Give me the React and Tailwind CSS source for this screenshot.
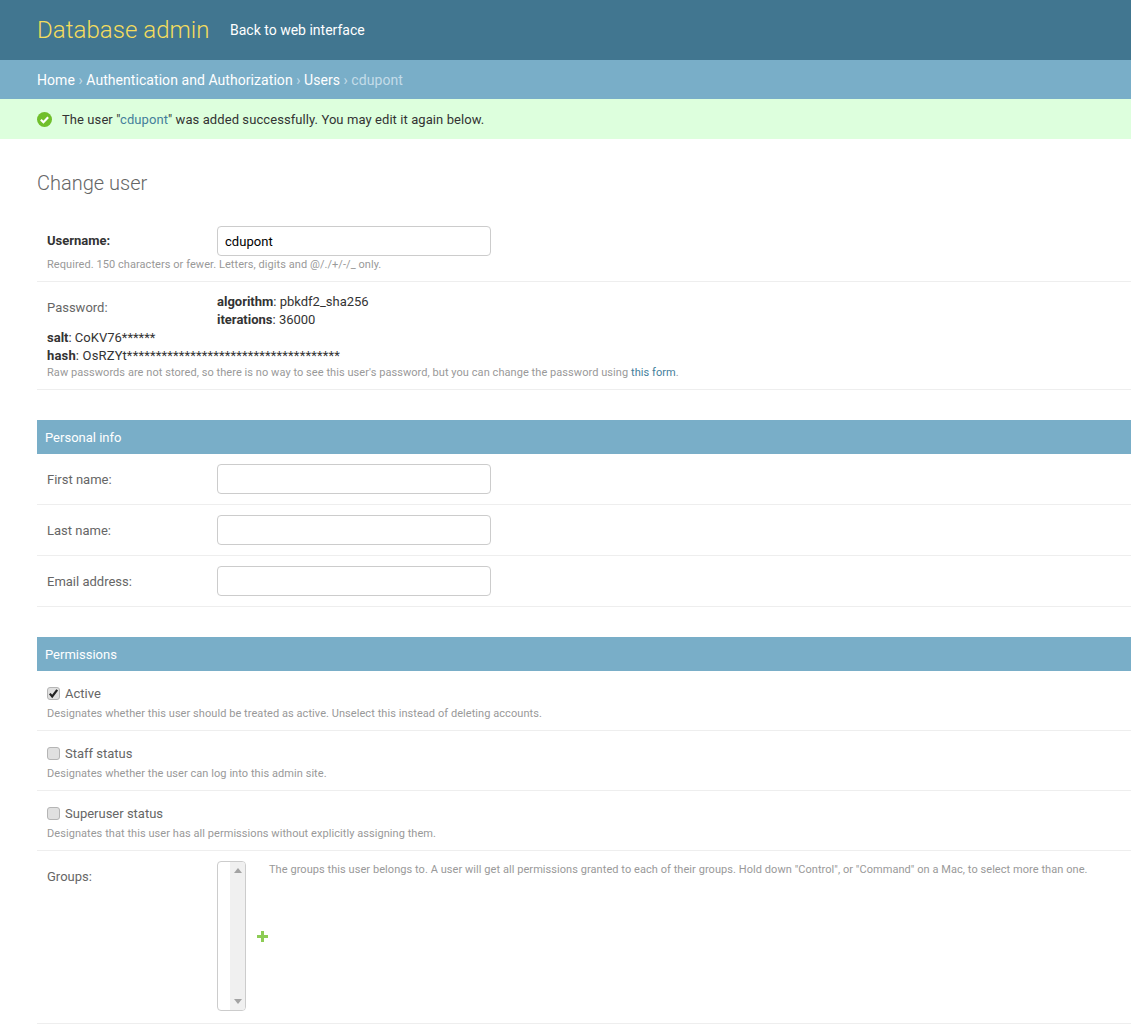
import React from 'react'

const inputClass = 'block w-[274px] h-[30px] px-[7px] bg-white border border-[#ccc] rounded text-[13px] tracking-[0.05px] text-black outline-none'
const helpClass = 'text-[11px] leading-[14px] text-[#999] tracking-[0.06px]'

const Checkbox = ({ checked }) => (
  <span className="relative block w-[13px] h-[13px] rounded-[3px] border border-[#b5b5b5] bg-[#e0e0e0]">
    {checked && (
      <svg viewBox="0 0 13 13" className="absolute -left-px -top-px w-[13px] h-[13px]">
        <path d="M2.8 6.6 L5.2 9.4 L10.2 2.8" fill="none" stroke="#222" strokeWidth="2.2" />
      </svg>
    )}
  </span>
)

const TextRow = ({ label, value }) => (
  <div className="flex items-center h-[51px] pl-[10px] border-b border-[#eee]">
    <label className="w-[170px] pt-[2px] text-[#666]">{label}</label>
    <input type="text" defaultValue={value} className={inputClass} />
  </div>
)

const CheckRow = ({ label, help, checked }) => (
  <div className="h-[60px] pl-[10px] pt-[15px] border-b border-[#eee]">
    <div className="flex items-center h-[14px]">
      <Checkbox checked={checked} />
      <span className="ml-[5px] text-[#666] leading-none">{label}</span>
    </div>
    <p className={`mt-[7px] ${helpClass}`}>{help}</p>
  </div>
)

const SectionHeader = ({ children }) => (
  <h2 className="h-[34px] flex items-center px-2 pt-[2px] bg-[#79aec8] text-white text-[13px] font-normal">
    {children}
  </h2>
)

export default function App() {
  return (
    <div className="font-['Roboto',sans-serif] text-[13px] text-[#333] bg-white min-h-[1025px] overflow-hidden">
      <header className="h-[60px] bg-[#417690] flex items-center pl-[37px]">
        <h1 className="w-[193px] text-[24px] tracking-[0.05px] font-light text-[#f5dd5d]">Database admin</h1>
        <a className="text-[14px] text-white">Back to web interface</a>
      </header>

      <nav className="h-[39px] bg-[#79aec8] flex items-center pl-[37px] pt-[2px] text-[14px] tracking-[0.06px] text-white whitespace-pre">
        <a>Home</a>
        <span className="text-[#c4dce8]"> › </span>
        <a>Authentication and Authorization</a>
        <span className="text-[#c4dce8]"> › </span>
        <a>Users</a>
        <span className="text-[#c4dce8]"> › cdupont</span>
      </nav>

      <div className="h-[40px] bg-[#dfd] flex items-center pl-[37px] pt-px tracking-[0.08px]">
        <svg viewBox="0 0 14 14" className="w-[15px] h-[15px] mr-[10px] shrink-0">
          <circle cx="7" cy="7" r="7" fill="#70bf2b" />
          <path d="M3.6 7.2 L6 9.6 L10.4 4.9" fill="none" stroke="#fff" strokeWidth="2" />
        </svg>
        <span>
          The user "<a className="text-[#447e9b]">cdupont</a>" was added successfully. You may edit it again below.
        </span>
      </div>

      <main className="pl-[37px] pt-[32px]">
        <h1 className="text-[20px] leading-6 font-light text-[#666] mb-[20px]">Change user</h1>

        <div className="h-[67px] pl-[10px] pt-[11px] border-b border-[#eee]">
          <div className="flex items-center">
            <label className="w-[170px] font-bold">Username:</label>
            <input type="text" defaultValue="cdupont" className={inputClass} />
          </div>
          <p className={`mt-[2px] ${helpClass}`}>
            Required. 150 characters or fewer. Letters, digits and @/./+/-/_ only.
          </p>
        </div>

        <div className="h-[108px] pl-[10px] pt-[11px] border-b border-[#eee] leading-[18px]">
          <div className="flex">
            <label className="w-[170px] text-[#666] pt-[6px]">Password:</label>
            <div>
              <div><strong>algorithm</strong>: pbkdf2_sha256</div>
              <div><strong>iterations</strong>: 36000</div>
            </div>
          </div>
          <div><strong>salt</strong>: CoKV76******</div>
          <div className="tracking-[0.16px]"><strong>hash</strong>: OsRZYt*************************************</div>
          <p className={`mt-px ${helpClass}`}>
            Raw passwords are not stored, so there is no way to see this user's password, but you can change the password using <a className="text-[#447e9b]">this form</a>.
          </p>
        </div>

        <section className="mt-[30px]">
          <SectionHeader>Personal info</SectionHeader>
          <TextRow label="First name:" />
          <TextRow label="Last name:" />
          <TextRow label="Email address:" />
        </section>

        <section className="mt-[30px]">
          <SectionHeader>Permissions</SectionHeader>
          <CheckRow
            label="Active"
            checked
            help="Designates whether this user should be treated as active. Unselect this instead of deleting accounts."
          />
          <CheckRow
            label="Staff status"
            help="Designates whether the user can log into this admin site."
          />
          <CheckRow
            label="Superuser status"
            help="Designates that this user has all permissions without explicitly assigning them."
          />

          <div className="h-[173px] flex pl-[10px] pt-[10px] border-b border-[#eee]">
            <label className="w-[170px] text-[#666] pt-[6px]">Groups:</label>
            <div className="w-[29px] h-[150px] border border-[#ccc] rounded flex justify-end overflow-hidden">
              <div className="w-[15px] bg-[#f0f0f0] flex flex-col items-center justify-between py-[6px]">
                <svg viewBox="0 0 8 5" className="w-[8px] h-[5px]"><path d="M4 0 L8 5 L0 5 Z" fill="#a3a3a3" /></svg>
                <svg viewBox="0 0 8 5" className="w-[8px] h-[5px]"><path d="M0 0 L8 0 L4 5 Z" fill="#a3a3a3" /></svg>
              </div>
            </div>
            <div className="w-[23px] h-[150px] flex items-center pl-[11px]">
              <svg viewBox="0 0 11 11" className="w-[11px] h-[11px] shrink-0 mt-[1px]">
                <path d="M4 0 H7 V4 H11 V7 H7 V11 H4 V7 H0 V4 H4 Z" fill="#70bf2b" opacity="0.8" />
              </svg>
            </div>
            <p className={`pt-[2px] whitespace-nowrap ${helpClass}`}>
              The groups this user belongs to. A user will get all permissions granted to each of their groups. Hold down "Control", or "Command" on a Mac, to select more than one.
            </p>
          </div>
        </section>
      </main>
    </div>
  )
}
